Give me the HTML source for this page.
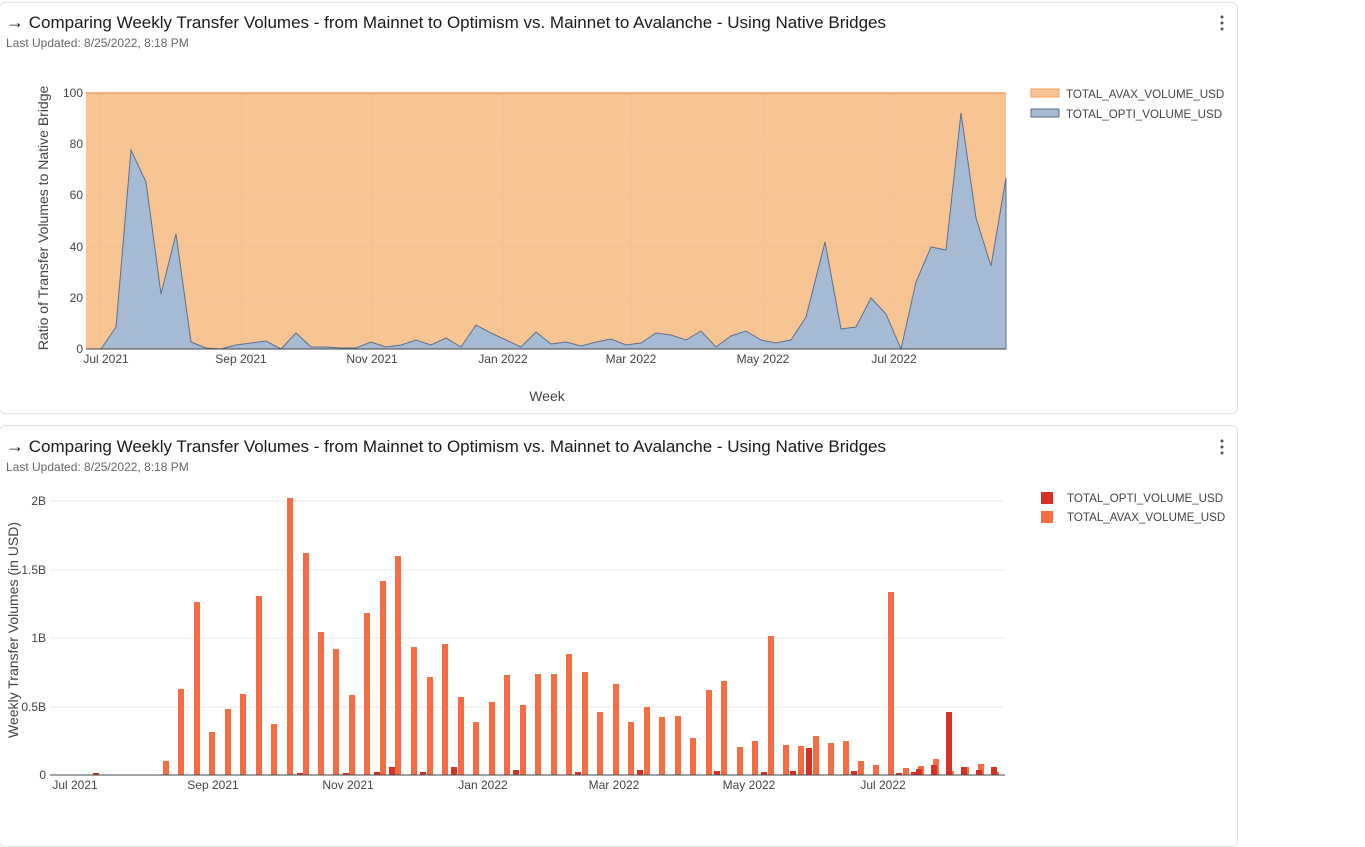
<!DOCTYPE html>
<html><head><meta charset="utf-8"><style>
body{margin:0;background:#fff;width:1365px;height:822px;overflow:hidden;font-family:"Liberation Sans",sans-serif;position:relative}
.card{position:absolute;left:-1px;width:1237px;border:1px solid #e3e3e3;border-radius:6px;background:#fff}
.t{position:absolute;left:6px;font-size:17px;color:#1a1a1a;white-space:nowrap}
.s{position:absolute;left:6px;font-size:12px;color:#666}
svg{position:absolute;left:0;top:0}
text{font-family:"Liberation Sans",sans-serif}
</style></head><body>
<div class="card" style="top:2px;height:410px"></div>
<div class="card" style="top:425px;height:420px"></div>
<div class="t" style="top:12px"><span style="font-size:18px">→</span> Comparing Weekly Transfer Volumes - from Mainnet to Optimism vs. Mainnet to Avalanche - Using Native Bridges</div>
<div class="s" style="top:36px">Last Updated: 8/25/2022, 8:18 PM</div>
<div class="t" style="top:436px"><span style="font-size:18px">→</span> Comparing Weekly Transfer Volumes - from Mainnet to Optimism vs. Mainnet to Avalanche - Using Native Bridges</div>
<div class="s" style="top:460px">Last Updated: 8/25/2022, 8:18 PM</div>
<svg width="1365" height="822">
<g fill="#555"><circle cx="1222" cy="17" r="1.5"/><circle cx="1222" cy="23" r="1.5"/><circle cx="1222" cy="29" r="1.5"/><circle cx="1222" cy="441" r="1.5"/><circle cx="1222" cy="447" r="1.5"/><circle cx="1222" cy="453" r="1.5"/></g>
<!-- top chart -->
<rect x="86" y="93" width="920" height="256" fill="#f7c594"/>
<line x1="86" y1="93" x2="1006" y2="93" stroke="#f0a060" stroke-width="1.5"/>
<g stroke="#eebc8c" stroke-width="0.5"><line x1="100" y1="93" x2="100" y2="349"/><line x1="241" y1="93" x2="241" y2="349"/><line x1="372" y1="93" x2="372" y2="349"/><line x1="503" y1="93" x2="503" y2="349"/><line x1="631" y1="93" x2="631" y2="349"/><line x1="763" y1="93" x2="763" y2="349"/><line x1="894" y1="93" x2="894" y2="349"/><line x1="86" y1="144" x2="1006" y2="144"/><line x1="86" y1="195" x2="1006" y2="195"/><line x1="86" y1="247" x2="1006" y2="247"/><line x1="86" y1="298" x2="1006" y2="298"/></g>
<polygon fill="#a6bbd3" stroke="#5b6f8c" stroke-width="1" points="86,349 101,349 116,327 131,150 146,182 161,294 176,234 191,342 206,348 221,349 236,345 251,343 266,341 281,349 296,333 311,347 326,347 341,348 356,348 371,342 386,347 401,345 416,340 431,345 446,338 461,347 476,325 491,333 506,340 521,347 536,332 551,344 566,342 581,346 596,342 611,339 626,345 641,343 656,333 671,335 686,340 701,331 716,347 731,336 746,331 761,340 776,343 791,340 806,317 825,242 841,329 856,327 871,298 886,314 901,349 916,282 931,247 946,250 961,113 976,218 991,266 1006,178 1006,349"/>
<line x1="86" y1="349" x2="1006" y2="349" stroke="#444" stroke-width="1"/>
<g font-size="12" fill="#444" text-anchor="end"><text x="83" y="97">100</text><text x="83" y="148">80</text><text x="83" y="199">60</text><text x="83" y="251">40</text><text x="83" y="302">20</text><text x="83" y="353">0</text></g>
<g font-size="12" fill="#444" text-anchor="middle"><text x="106" y="363">Jul 2021</text><text x="241" y="363">Sep 2021</text><text x="372" y="363">Nov 2021</text><text x="503" y="363">Jan 2022</text><text x="631" y="363">Mar 2022</text><text x="763" y="363">May 2022</text><text x="894" y="363">Jul 2022</text></g>
<text x="547" y="401" font-size="14" fill="#444" text-anchor="middle">Week</text>
<text transform="translate(48,218) rotate(-90)" font-size="14" fill="#444" text-anchor="middle">Ratio of Transfer Volumes to Native Bridge</text>
<rect x="1031" y="89" width="28" height="8" fill="#f7c594" stroke="#f0a060"/>
<rect x="1031" y="109" width="28" height="8" fill="#a6bbd3" stroke="#5b6f8c"/>
<g font-size="11.6" fill="#444"><text x="1066" y="98">TOTAL_AVAX_VOLUME_USD</text><text x="1066" y="118">TOTAL_OPTI_VOLUME_USD</text></g>
<!-- bottom chart -->
<g stroke="#e8e8e8" stroke-width="1"><line x1="50" y1="501" x2="1005" y2="501"/><line x1="50" y1="570" x2="1005" y2="570"/><line x1="50" y1="638" x2="1005" y2="638"/><line x1="50" y1="707" x2="1005" y2="707"/></g>
<g font-size="12" fill="#444" text-anchor="end"><text x="46" y="505">2B</text><text x="46" y="574">1.5B</text><text x="46" y="642">1B</text><text x="46" y="711">0.5B</text><text x="46" y="779">0</text></g>
<text transform="translate(18,630) rotate(-90)" font-size="14" fill="#444" text-anchor="middle">Weekly Transfer Volumes (in USD)</text>
<g fill="#f46d43">
<rect x="163" y="761" width="6" height="14"/><rect x="178" y="689" width="6" height="86"/><rect x="194" y="602" width="6" height="173"/><rect x="209" y="732" width="6" height="43"/><rect x="225" y="709" width="6" height="66"/><rect x="240" y="694" width="6" height="81"/><rect x="256" y="596" width="6" height="179"/><rect x="271" y="724" width="6" height="51"/><rect x="287" y="498" width="6" height="277"/><rect x="303" y="553" width="6" height="222"/><rect x="318" y="632" width="6" height="143"/><rect x="333" y="649" width="6" height="126"/><rect x="349" y="695" width="6" height="80"/><rect x="364" y="613" width="6" height="162"/><rect x="380" y="581" width="6" height="194"/><rect x="395" y="556" width="6" height="219"/><rect x="411" y="647" width="6" height="128"/><rect x="427" y="677" width="6" height="98"/><rect x="442" y="644" width="6" height="131"/><rect x="458" y="697" width="6" height="78"/><rect x="473" y="722" width="6" height="53"/><rect x="489" y="702" width="6" height="73"/><rect x="504" y="675" width="6" height="100"/><rect x="520" y="705" width="6" height="70"/><rect x="535" y="674" width="6" height="101"/><rect x="551" y="674" width="6" height="101"/><rect x="566" y="654" width="6" height="121"/><rect x="582" y="672" width="6" height="103"/><rect x="597" y="712" width="6" height="63"/><rect x="613" y="684" width="6" height="91"/><rect x="628" y="722" width="6" height="53"/><rect x="644" y="707" width="6" height="68"/><rect x="659" y="717" width="6" height="58"/><rect x="675" y="716" width="6" height="59"/><rect x="690" y="738" width="6" height="37"/><rect x="706" y="690" width="6" height="85"/><rect x="721" y="681" width="6" height="94"/><rect x="737" y="747" width="6" height="28"/><rect x="752" y="741" width="6" height="34"/><rect x="768" y="636" width="6" height="139"/><rect x="783" y="745" width="6" height="30"/><rect x="798" y="746" width="6" height="29"/><rect x="813" y="736" width="6" height="39"/><rect x="828" y="743" width="6" height="32"/><rect x="843" y="741" width="6" height="34"/><rect x="858" y="761" width="6" height="14"/><rect x="873" y="765" width="6" height="10"/><rect x="888" y="592" width="6" height="183"/><rect x="903" y="768" width="6" height="7"/><rect x="918" y="766" width="6" height="9"/><rect x="933" y="759" width="6" height="16"/><rect x="948" y="771" width="6" height="4"/><rect x="963" y="767" width="6" height="8"/><rect x="978" y="764" width="6" height="11"/><rect x="993" y="772" width="6" height="3"/>
</g>
<g fill="#d73027">
<rect x="93" y="773" width="6" height="2"/><rect x="297" y="773" width="6" height="2"/><rect x="343" y="773" width="6" height="2"/><rect x="374" y="772" width="6" height="3"/><rect x="389" y="767" width="6" height="8"/><rect x="420" y="772" width="6" height="3"/><rect x="451" y="767" width="6" height="8"/><rect x="513" y="770" width="6" height="5"/><rect x="575" y="772" width="6" height="3"/><rect x="637" y="770" width="6" height="5"/><rect x="714" y="771" width="6" height="4"/><rect x="761" y="772" width="6" height="3"/><rect x="790" y="771" width="6" height="4"/><rect x="806" y="748" width="6" height="27"/><rect x="851" y="771" width="6" height="4"/><rect x="896" y="773" width="6" height="2"/><rect x="911" y="772" width="6" height="3"/><rect x="916" y="769" width="6" height="6"/><rect x="931" y="765" width="6" height="10"/><rect x="946" y="712" width="6" height="63"/><rect x="961" y="767" width="6" height="8"/><rect x="976" y="770" width="6" height="5"/><rect x="991" y="767" width="6" height="8"/>
</g>
<line x1="50" y1="775" x2="1005" y2="775" stroke="#444" stroke-width="1"/>
<g font-size="12" fill="#444" text-anchor="middle"><text x="75" y="789">Jul 2021</text><text x="213" y="789">Sep 2021</text><text x="348" y="789">Nov 2021</text><text x="483" y="789">Jan 2022</text><text x="614" y="789">Mar 2022</text><text x="749" y="789">May 2022</text><text x="883" y="789">Jul 2022</text></g>
<rect x="1041" y="492" width="12" height="12" fill="#d73027"/>
<rect x="1041" y="511" width="12" height="12" fill="#f46d43"/>
<g font-size="11.6" fill="#444"><text x="1067" y="502">TOTAL_OPTI_VOLUME_USD</text><text x="1067" y="521">TOTAL_AVAX_VOLUME_USD</text></g>
</svg>
</body></html>
